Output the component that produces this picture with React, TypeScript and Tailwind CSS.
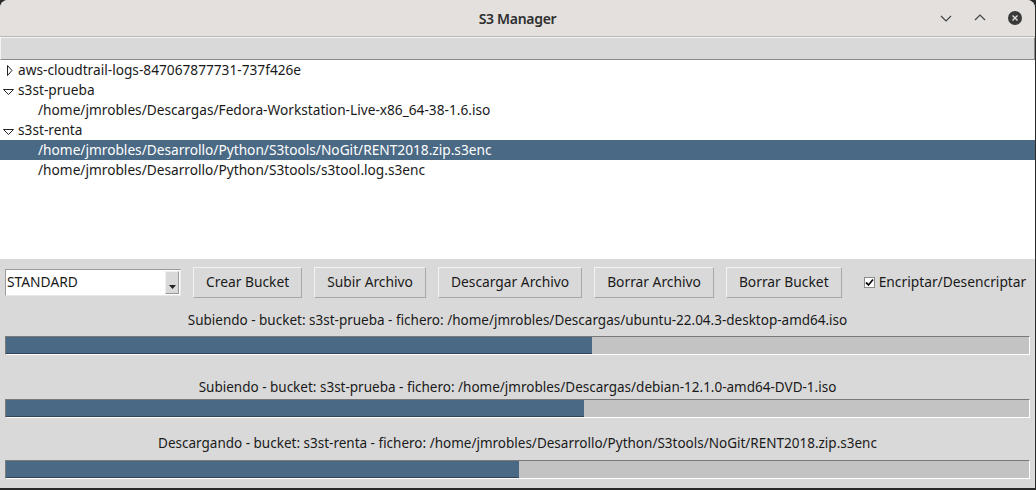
import React from "react";

const tree = [
  { label: "aws-cloudtrail-logs-847067877731-737f426e", level: 0, open: false },
  { label: "s3st-prueba", level: 0, open: true },
  { label: "/home/jmrobles/Descargas/Fedora-Workstation-Live-x86_64-38-1.6.iso", level: 1 },
  { label: "s3st-renta", level: 0, open: true },
  { label: "/home/jmrobles/Desarrollo/Python/S3tools/NoGit/RENT2018.zip.s3enc", level: 1, selected: true },
  { label: "/home/jmrobles/Desarrollo/Python/S3tools/s3tool.log.s3enc", level: 1 },
];

const buttons = ["Crear Bucket", "Subir Archivo", "Descargar Archivo", "Borrar Archivo", "Borrar Bucket"];

const transfers = [
  {
    text: "Subiendo - bucket: s3st-prueba - fichero: /home/jmrobles/Descargas/ubuntu-22.04.3-desktop-amd64.iso",
    pct: 57.3,
    labelGap: "mt-[12px]",
    barGap: "mt-[6px]",
  },
  {
    text: "Subiendo - bucket: s3st-prueba - fichero: /home/jmrobles/Descargas/debian-12.1.0-amd64-DVD-1.iso",
    pct: 56.5,
    labelGap: "mt-[22px]",
    barGap: "mt-[2px]",
  },
  {
    text: "Descargando - bucket: s3st-renta - fichero: /home/jmrobles/Desarrollo/Python/S3tools/NoGit/RENT2018.zip.s3enc",
    pct: 50.1,
    labelGap: "mt-[15px]",
    barGap: "mt-[7px]",
  },
];

const Arrow = ({ open }: { open?: boolean }) =>
  open ? (
    <svg width="11" height="8" viewBox="0 0 11 8" className="ml-[3px] mr-[4px] mt-[3px]">
      <path d="M0.5 1.5 H10.5 L5.5 6.5 Z" fill="none" stroke="#222" strokeWidth="1" />
    </svg>
  ) : (
    <svg width="7" height="11" viewBox="0 0 7 11" className="ml-[6px] mr-[5px]">
      <path d="M1.5 0.5 V10.5 L6 5.5 Z" fill="none" stroke="#222" strokeWidth="1" />
    </svg>
  );

const App = () => {
  return (
    <div
      className="w-[1036px] h-[490px] bg-[#2a2a2a] overflow-hidden text-[13.7px] text-[#1a1a1a]"
      style={{ fontFamily: '"Noto Sans", "DejaVu Sans", sans-serif' }}
    >
      <div className="w-[1035px] h-[488px] flex flex-col bg-[#d9d9d9] rounded-t-[8px] overflow-hidden">
        {/* title bar */}
        <div className="h-[37px] bg-[#e3e0dd] border-b border-[#bdb8b2] flex items-center relative shrink-0">
          <div className="flex-1 text-center text-[14px] font-semibold text-[#2e2e2e] tracking-[-0.3px]">S3 Manager</div>
          <div className="absolute right-[12px] top-[10px] flex items-center gap-[20px]">
            <svg width="14" height="14" viewBox="0 0 14 14">
              <path d="M2 5 L7 10 L12 5" fill="none" stroke="#444" strokeWidth="1.2" />
            </svg>
            <svg width="14" height="14" viewBox="0 0 14 14">
              <path d="M2 9 L7 4 L12 9" fill="none" stroke="#444" strokeWidth="1.2" />
            </svg>
            <svg width="16" height="16" viewBox="0 0 16 16">
              <circle cx="8" cy="8" r="7" fill="#3a3a3a" />
              <path d="M5.5 5.5 L10.5 10.5 M10.5 5.5 L5.5 10.5" stroke="#e3e0dd" strokeWidth="1.4" />
            </svg>
          </div>
        </div>

        {/* tree */}
        <div className="h-[222px] bg-white flex flex-col shrink-0">
          <div className="h-[23px] bg-[#d9d9d9] border-t border-l border-[#f4f4f4] border-b border-b-[#8a8a8a] border-r border-r-[#8a8a8a] shrink-0" />
          <div className="flex flex-col">
            {tree.map((row, i) => (
              <div
                key={i}
                className={`h-[20px] flex items-center whitespace-nowrap ${row.selected ? "bg-[#4a6984] text-white" : ""} ${row.level === 1 ? "pl-[38px]" : ""}`}
              >
                {row.level === 0 && <Arrow open={row.open} />}
                <span>{row.label}</span>
              </div>
            ))}
          </div>
        </div>

        {/* controls */}
        <div className="flex-1 flex flex-col">
          <div className="flex items-center pt-[8px] pl-[5px] text-[13.8px]">
            <div className="w-[176px] h-[27px] bg-white border border-t-[#9a9a9a] border-l-[#9a9a9a] border-r-[#e8e8e8] border-b-[#e8e8e8] flex items-center justify-between">
              <span className="pl-[1px]">STANDARD</span>
              <div className="w-[14px] h-[23px] mr-[1px] bg-[#d9d9d9] border border-[#f0f0f0] border-r-[#999] border-b-[#999] flex items-end justify-center pb-[4px]">
                <svg width="7" height="4" viewBox="0 0 7 4">
                  <path d="M0 0 H7 L3.5 4 Z" fill="#222" />
                </svg>
              </div>
            </div>
            <div className="flex gap-[12px] ml-[12px]">
              {buttons.map((b) => (
                <button
                  key={b}
                  className="h-[31px] px-[12px] bg-[#d9d9d9] border border-t-[#f2f2f2] border-l-[#f2f2f2] border-r-[#a8a8a8] border-b-[#a8a8a8] text-[#1a1a1a] whitespace-nowrap"
                >
                  {b}
                </button>
              ))}
            </div>
            <label className="flex items-center ml-[22px] gap-[4px] whitespace-nowrap">
              <span className="w-[11px] h-[11px] bg-white border border-[#8a8a8a] flex items-center justify-center">
                <svg width="9" height="9" viewBox="0 0 9 9">
                  <path d="M1 4.5 L3.5 7 L8 1.5" fill="none" stroke="#111" strokeWidth="1.8" />
                </svg>
              </span>
              <span>Encriptar/Desencriptar</span>
            </label>
          </div>

          {transfers.map((t, i) => (
            <div key={i} className="flex flex-col">
              <div className={`text-center h-[20px] leading-[20px] whitespace-nowrap text-[13.5px] ${t.labelGap}`}>{t.text}</div>
              <div
                className={`mx-[5px] h-[19px] bg-[#c3c3c3] border border-t-[#7a7a7a] border-l-[#7a7a7a] border-r-white border-b-white ${t.barGap}`}
              >
                <div className="h-full bg-[#4a6984] border-b border-[#2f4557]" style={{ width: `${t.pct}%` }} />
              </div>
            </div>
          ))}
        </div>
      </div>
    </div>
  );
};

export default App;
